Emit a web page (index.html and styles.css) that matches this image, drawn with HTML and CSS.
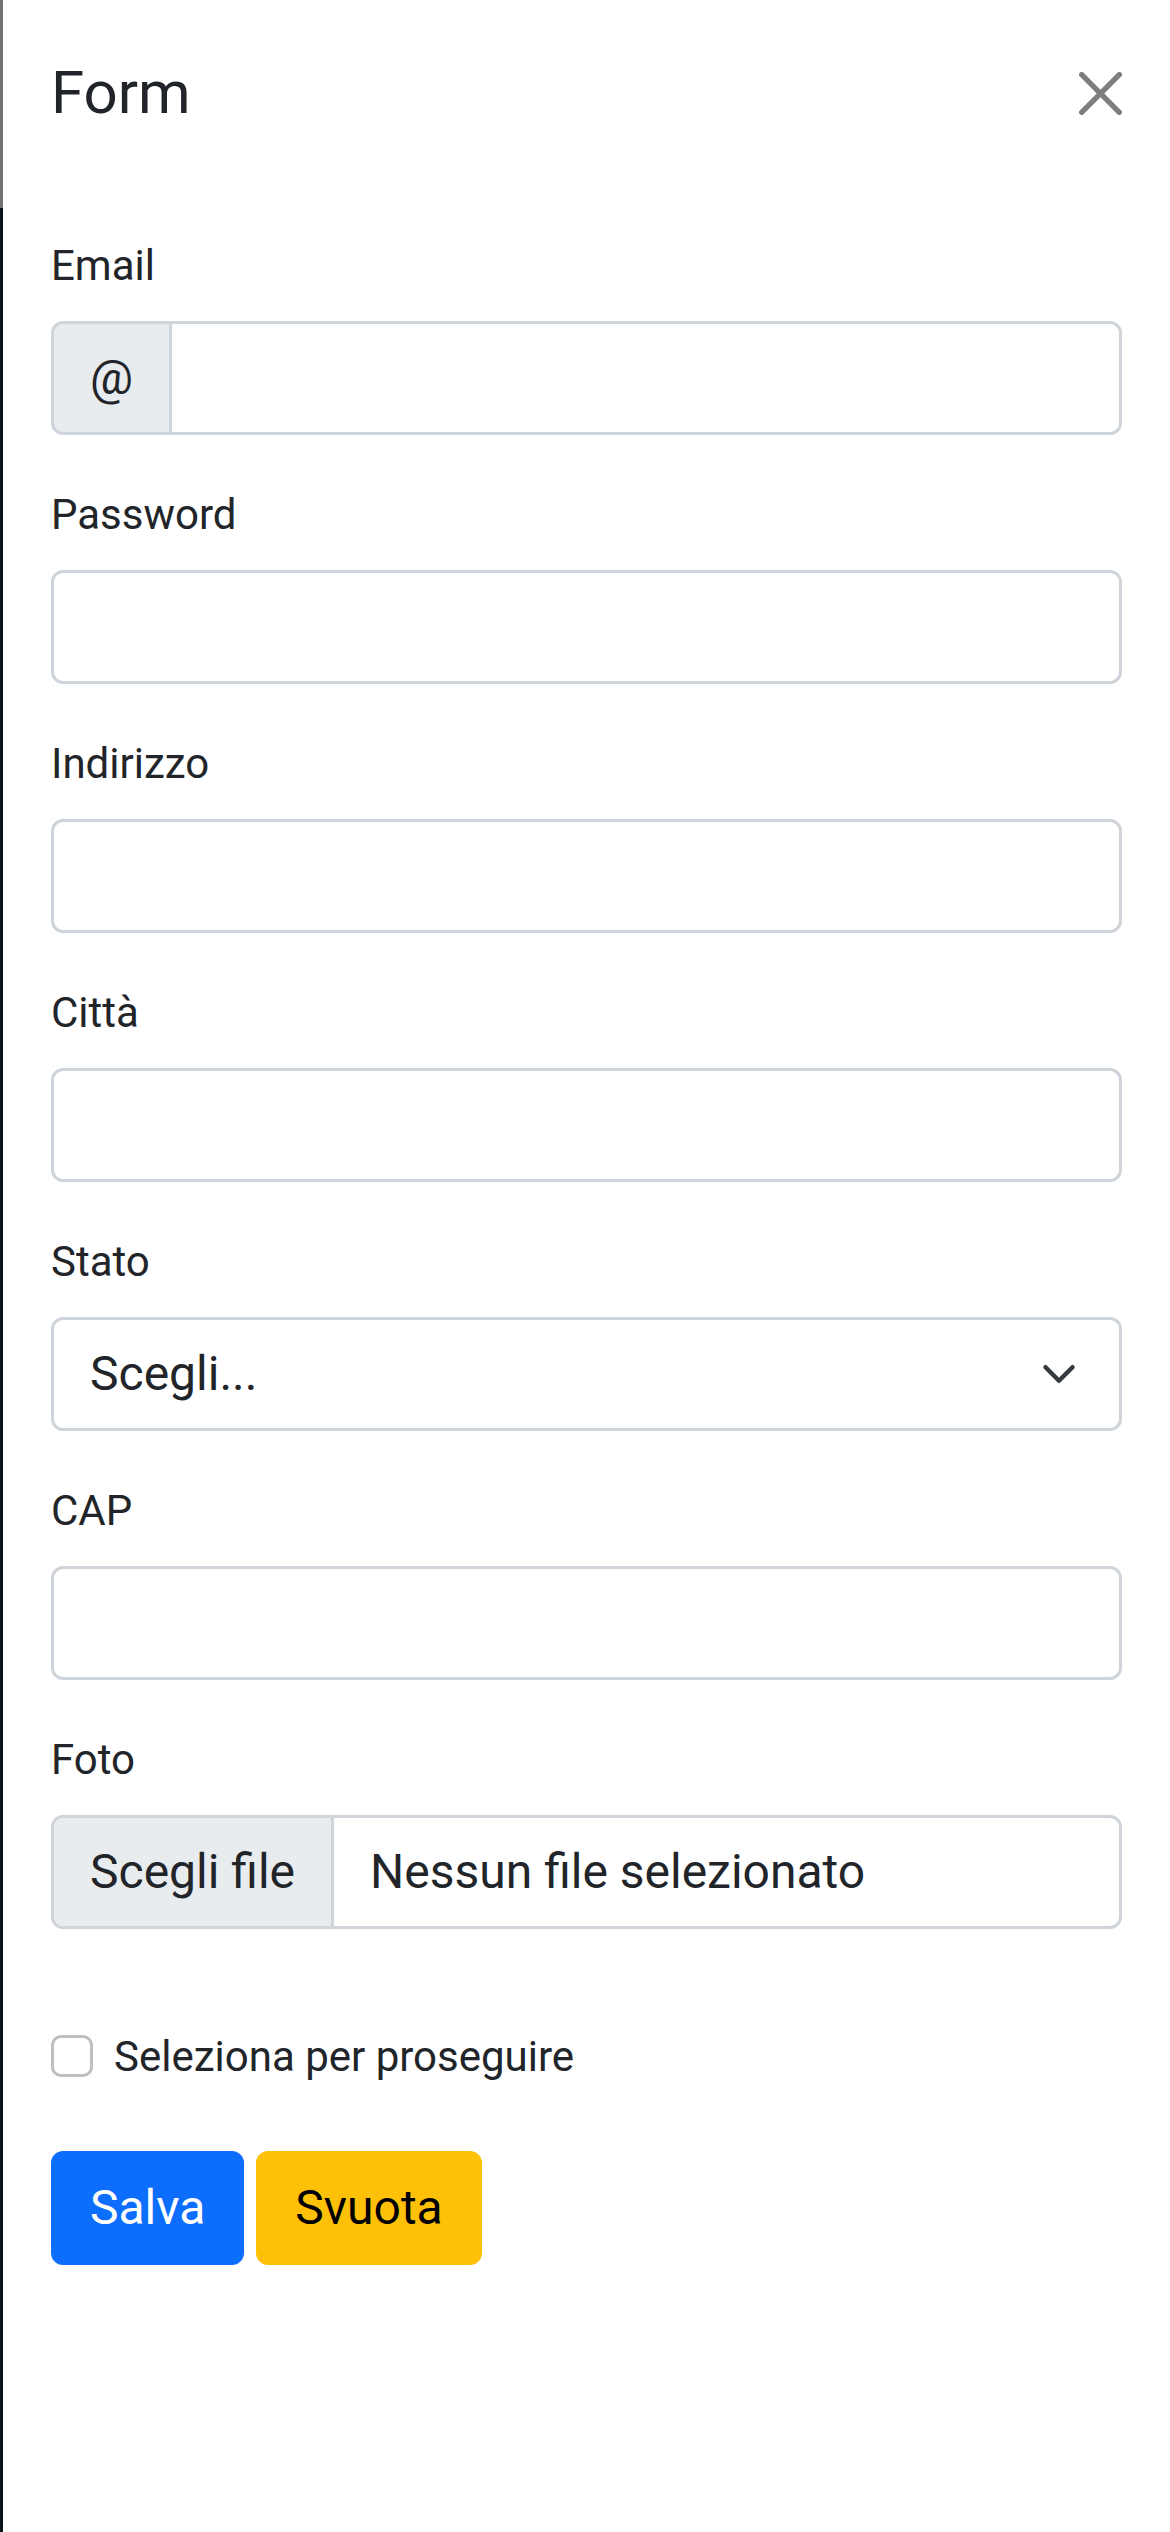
FILE: index.html
```html
<!DOCTYPE html>
<html lang="it">
<head>
<meta charset="utf-8">
<title>Form</title>
<link rel="stylesheet" href="styles.css">
</head>
<body>
<div class="page">
  <div class="strip"></div>
  <div class="panel">
    <div class="panel-header">
      <h5 class="panel-title">Form</h5>
      <svg class="btn-close" viewBox="0 0 16 16" aria-label="Chiudi"><path d="M.293.293a1 1 0 0 1 1.414 0L8 6.586 14.293.293a1 1 0 1 1 1.414 1.414L9.414 8l6.293 6.293a1 1 0 0 1-1.414 1.414L8 9.414l-6.293 6.293a1 1 0 0 1-1.414-1.414L6.586 8 .293 1.707a1 1 0 0 1 0-1.414z"/></svg>
    </div>
    <div class="panel-body">
      <div class="field">
        <div class="label">Email</div>
        <div class="input-group">
          <div class="addon">@</div>
          <div class="control control-grouped"></div>
        </div>
      </div>
      <div class="field">
        <div class="label">Password</div>
        <div class="control"></div>
      </div>
      <div class="field">
        <div class="label">Indirizzo</div>
        <div class="control"></div>
      </div>
      <div class="field">
        <div class="label">Città</div>
        <div class="control"></div>
      </div>
      <div class="field">
        <div class="label">Stato</div>
        <div class="control select">
          <span>Scegli...</span>
          <svg class="chevron" viewBox="0 0 16 16"><path d="m2 5 6 6 6-6"/></svg>
        </div>
      </div>
      <div class="field">
        <div class="label">CAP</div>
        <div class="control"></div>
      </div>
      <div class="field">
        <div class="label">Foto</div>
        <div class="control file">
          <span class="file-btn">Scegli file</span>
          <span class="file-name">Nessun file selezionato</span>
        </div>
      </div>
      <div class="check">
        <span class="check-box"></span>
        <span class="check-label">Seleziona per proseguire</span>
      </div>
      <div class="buttons">
        <div class="btn btn-primary">Salva</div>
        <div class="btn btn-warning">Svuota</div>
      </div>
    </div>
  </div>
</div>
</body>
</html>
```

FILE: styles.css
```css
* { box-sizing: border-box; }

html, body {
  margin: 0;
  padding: 0;
  background: #ffffff;
}

body {
  font-family: Roboto, "Liberation Sans", sans-serif;
  color: #212529;
}

.page {
  display: flex;
  width: 1170px;
  min-height: 2532px;
}

.strip {
  width: 3px;
  flex: 0 0 3px;
  background: linear-gradient(to bottom, #707070 0, #707070 208px, #07131c 208px, #07131c 100%);
}

.panel {
  flex: 1;
  background: #ffffff;
}

.panel-header {
  display: flex;
  align-items: center;
  justify-content: space-between;
  padding: 48px 48px 48px 48px;
}

.panel-title {
  margin: 0;
  font-size: 60px;
  font-weight: 400;
  line-height: 90px;
  color: #212529;
}

.btn-close {
  width: 43px;
  height: 43px;
  fill: #000000;
  opacity: 0.5;
}

.panel-body {
  padding: 48px 48px 48px 48px;
}

.field {
  margin-bottom: 48px;
}

.label {
  font-size: 42px;
  line-height: 63px;
  margin-bottom: 24px;
}

.control {
  height: 114px;
  border: 3px solid #ced4da;
  border-radius: 12px;
  padding: 18px 36px;
  font-size: 48px;
  line-height: 72px;
  background: #ffffff;
  color: #212529;
}

.input-group {
  display: flex;
}

.addon {
  height: 114px;
  padding: 18px 36px;
  font-size: 48px;
  line-height: 72px;
  background: #e9ecef;
  border: 3px solid #ced4da;
  border-radius: 12px 0 0 12px;
  color: #212529;
}

.control-grouped {
  flex: 1;
  margin-left: -3px;
  border-radius: 0 12px 12px 0;
}

.select {
  display: flex;
  align-items: center;
  justify-content: space-between;
  padding-right: 42px;
}

.chevron {
  width: 36px;
  height: 36px;
  fill: none;
  stroke: #343a40;
  stroke-width: 2;
  stroke-linecap: round;
  stroke-linejoin: round;
}

.file {
  display: flex;
  align-items: center;
  padding: 0;
  overflow: hidden;
}

.file-btn {
  height: 100%;
  padding: 18px 36px;
  background: #e9ecef;
  border-right: 3px solid #ced4da;
  color: #212529;
}

.file-name {
  padding-left: 36px;
}

.check {
  display: flex;
  align-items: flex-start;
  margin-top: 96px;
  height: 63px;
  font-size: 42px;
  line-height: 63px;
}

.check-box {
  width: 42px;
  height: 42px;
  margin-top: 10px;
  margin-right: 21px;
  border: 3px solid #bfbfbf;
  border-radius: 10px;
  background: #ffffff;
}

.buttons {
  display: flex;
  gap: 12px;
  margin-top: 63px;
}

.btn {
  height: 114px;
  padding: 18px 36px;
  font-size: 48px;
  line-height: 72px;
  border: 3px solid transparent;
  border-radius: 12px;
}

.btn-primary {
  background: #0d6efd;
  border-color: #0d6efd;
  color: #ffffff;
}

.btn-warning {
  background: #ffc107;
  border-color: #ffc107;
  color: #000000;
}
```
